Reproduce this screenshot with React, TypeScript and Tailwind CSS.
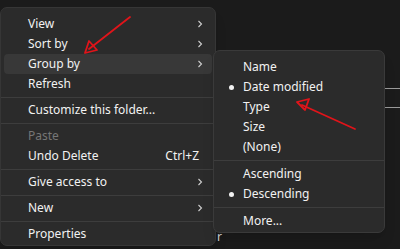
import React from "react";

type Item =
  | { kind: "sep" }
  | { kind: "item"; label: string; sub?: boolean; hint?: string; disabled?: boolean; active?: boolean; dot?: boolean };

const mainItems: Item[] = [
  { kind: "item", label: "View", sub: true },
  { kind: "item", label: "Sort by", sub: true },
  { kind: "item", label: "Group by", sub: true, active: true },
  { kind: "item", label: "Refresh" },
  { kind: "sep" },
  { kind: "item", label: "Customize this folder..." },
  { kind: "sep" },
  { kind: "item", label: "Paste", disabled: true },
  { kind: "item", label: "Undo Delete", hint: "Ctrl+Z" },
  { kind: "sep" },
  { kind: "item", label: "Give access to", sub: true },
  { kind: "sep" },
  { kind: "item", label: "New", sub: true },
  { kind: "sep" },
  { kind: "item", label: "Properties" },
];

const groupItems: Item[] = [
  { kind: "item", label: "Name" },
  { kind: "item", label: "Date modified", dot: true },
  { kind: "item", label: "Type" },
  { kind: "item", label: "Size" },
  { kind: "item", label: "(None)" },
  { kind: "sep" },
  { kind: "item", label: "Ascending" },
  { kind: "item", label: "Descending", dot: true },
  { kind: "sep" },
  { kind: "item", label: "More..." },
];

function Chevron() {
  return (
    <svg width="6" height="8" viewBox="0 0 6 8" className="shrink-0">
      <path d="M1.5 1 L4.5 4 L1.5 7" fill="none" stroke="#cfcfcf" strokeWidth="1.1" />
    </svg>
  );
}

function MenuRows({ items, indent, sep }: { items: Item[]; indent: string; sep: string }) {
  return (
    <>
      {items.map((it, i) =>
        it.kind === "sep" ? (
          <div key={i} className={sep}>
            <div className="h-px bg-[#3d3d3d]" />
          </div>
        ) : (
          <div
            key={i}
            className={`relative mx-[3px] flex h-[20px] items-center rounded-[4px] pr-[9px] ${indent} ${
              it.active ? "bg-[#383838]" : ""
            }`}
          >
            {it.dot && <span className="absolute left-[12px] top-[8px] h-[5px] w-[5px] rounded-full bg-[#f2f2f2]" />}
            <span className={`flex-1 ${it.disabled ? "text-[#767676]" : "text-[#f2f2f2]"}`}>{it.label}</span>
            {it.hint && <span className="mr-[4px] text-[#f2f2f2]">{it.hint}</span>}
            {it.sub && <Chevron />}
          </div>
        )
      )}
    </>
  );
}

export default function App() {
  return (
    <div
      className="relative h-[249px] w-[400px] overflow-hidden bg-[#1b1b1b] text-[12px] leading-none"
      style={{ fontFamily: '"Noto Sans", "Liberation Sans", sans-serif' }}
    >
      {/* explorer content behind the menus */}
      <div className="absolute left-[384px] top-[88px] h-px w-[16px] bg-[#9a9a9a]" />
      <div className="absolute left-[384px] top-[107px] h-px w-[16px] bg-[#9a9a9a]" />
      <span className="absolute left-[217px] top-[231px] text-[#d8d8d8]">r</span>

      <div className="absolute left-0 top-[7px] w-[216px] rounded-[7px] border border-[#363636] bg-[#2b2b2b] pb-[1px] pt-[6px] shadow-lg">
        <MenuRows items={mainItems} indent="pl-[24px]" sep="py-[2.5px]" />
      </div>

      <div className="absolute left-[213px] top-[50px] w-[172px] rounded-[7px] border border-[#3a3a3a] bg-[#2b2b2b] pb-[1px] pt-[6px] shadow-lg">
        <MenuRows items={groupItems} indent="pl-[26px]" sep="py-[3px]" />
      </div>

      <svg className="absolute left-0 top-0" width="400" height="249" viewBox="0 0 400 249">
        <g stroke="#e0141a" strokeWidth="1.8" fill="none" strokeLinejoin="round" strokeLinecap="round">
          <path d="M130 17 L89 49" />
          <path d="M85 53 L89 41 L97 50 Z" />
          <path d="M355 129 L302 105" />
          <path d="M297 102 L309 99 L305 110 Z" />
        </g>
      </svg>
    </div>
  );
}
